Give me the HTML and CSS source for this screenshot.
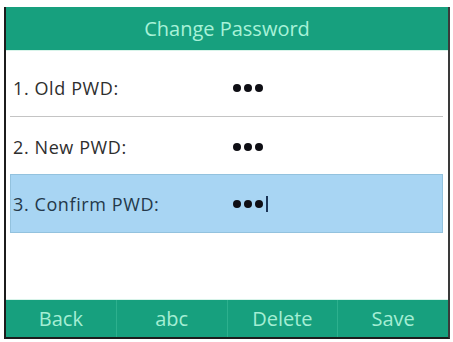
FILE: index.html
```html
<!DOCTYPE html>
<html>
<head>
<meta charset="utf-8">
<link rel="stylesheet" href="styles.css">
</head>
<body>
<div class="screen">
  <div class="title">Change Password</div>
  <div class="list">
    <div class="row row1">
      <span class="label">1. Old PWD:</span>
      <span class="dots"><i></i><i></i><i></i></span>
    </div>
    <div class="row row2">
      <span class="label">2. New PWD:</span>
      <span class="dots"><i></i><i></i><i></i></span>
    </div>
    <div class="row row3">
      <span class="label">3. Confirm PWD:</span>
      <span class="dots"><i></i><i></i><i></i><b class="cursor"></b></span>
    </div>
  </div>
  <div class="softkeys">
    <div class="key">Back</div>
    <div class="key">abc</div>
    <div class="key">Delete</div>
    <div class="key">Save</div>
  </div>
</div>
</body>
</html>
```
FILE: styles.css
```css
html, body {
  margin: 0;
  padding: 0;
  background: #ffffff;
}
body {
  width: 453px;
  height: 342px;
  overflow: hidden;
  font-family: "Open Sans", "DejaVu Sans", sans-serif;
}
.screen {
  margin: 7px 0 0 4px;
  width: 442px;
  height: 330px;
  border-left: 2px solid #1c1c1c;
  border-right: 2px solid #3a3a3a;
  border-bottom: 2px solid #1c1c1c;
  display: flex;
  flex-direction: column;
  background: #fff;
}
.title {
  height: 44px;
  background: #17a07e;
  color: #a8f2d8;
  font-size: 20px;
  display: flex;
  align-items: center;
  justify-content: center;
  border-bottom: 1px solid #d8f4ea;
  box-sizing: border-box;
}
.list {
  flex: 1;
  padding: 0 5px 0 4px;
  display: flex;
  flex-direction: column;
}
.row {
  display: flex;
  align-items: center;
  box-sizing: border-box;
  font-size: 18px;
  color: #2e2e2e;
  padding-left: 3px;
}
.row1 {
  height: 66px;
  padding-top: 8px;
  border-bottom: 1px solid #c4c4c4;
}
.row2 {
  height: 57px;
  padding-top: 3px;
}
.row3 {
  height: 59px;
  background: #a8d5f3;
  border: 1px solid #93c2de;
  padding-left: 2px;
  color: #24384a;
}
.label {
  width: 220px;
  letter-spacing: 0.6px;
}
.dots {
  display: flex;
  align-items: center;
  gap: 3px;
}
.dots i {
  width: 8px;
  height: 8px;
  border-radius: 50%;
  background: #0e0e14;
}
.cursor {
  width: 2px;
  height: 16px;
  background: #1b3556;
  margin-left: 0;
}
.softkeys {
  height: 37px;
  background: #17a07e;
  display: flex;
  border-top: 1px solid #d8f4ea;
}
.key {
  flex: 1;
  display: flex;
  align-items: center;
  justify-content: center;
  color: #a4eed4;
  font-size: 20px;
  border-left: 1px solid #2db08e;
}
.key:first-child {
  border-left: none;
}
```
